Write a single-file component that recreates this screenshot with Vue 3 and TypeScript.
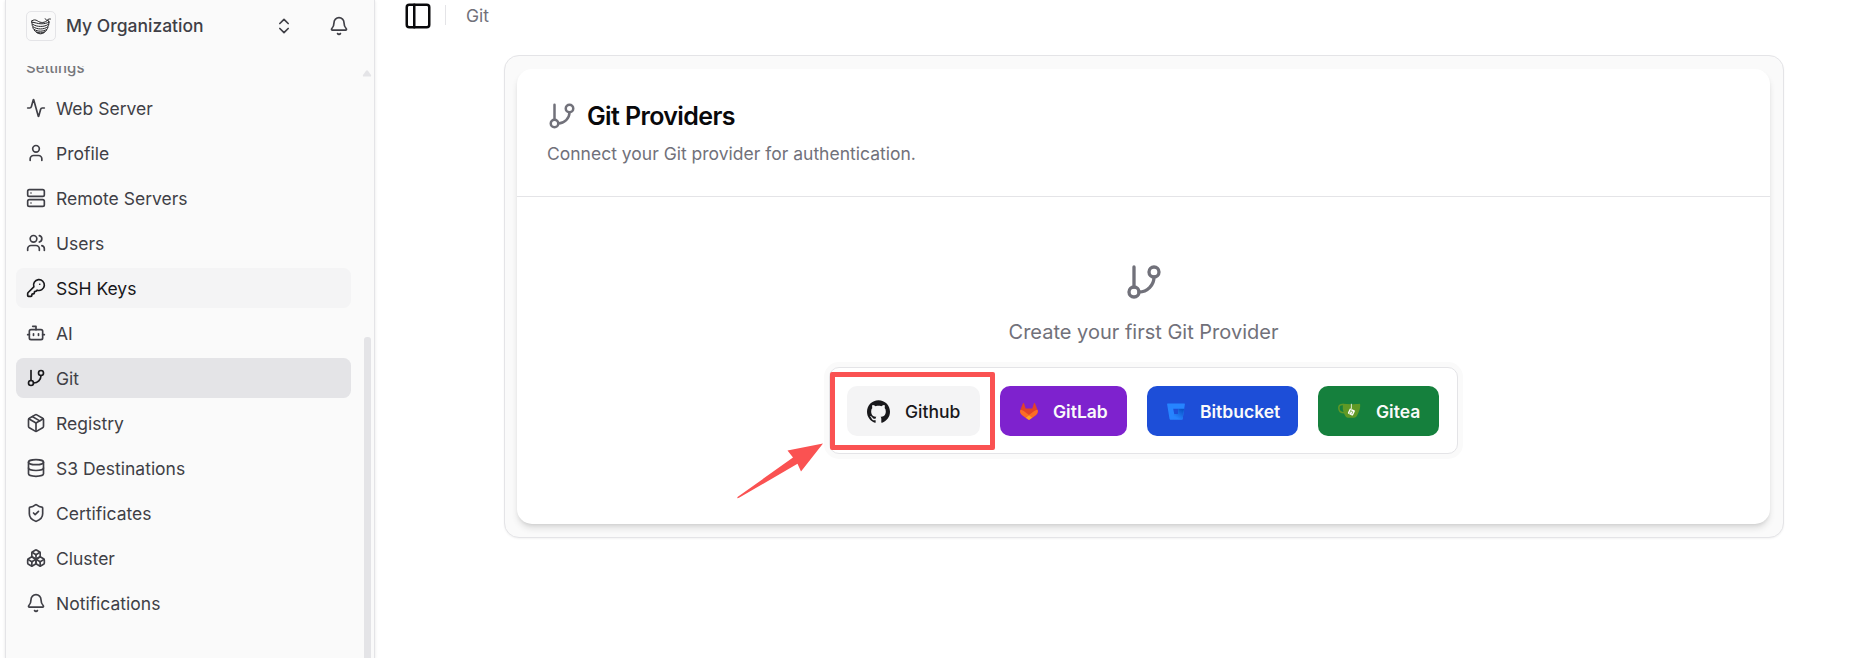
<script setup lang="ts">
interface NavItem {
  label: string
  paths: string[]
  state?: 'active' | 'hover'
}

const branch = [
  'M6 3v12',
  'M21 6a3 3 0 1 1-6 0 3 3 0 0 1 6 0',
  'M9 18a3 3 0 1 1-6 0 3 3 0 0 1 6 0',
  'M18 9a9 9 0 0 1-9 9',
]
const bell = ['M10.268 21a2 2 0 0 0 3.464 0', 'M3.262 15.326A1 1 0 0 0 4 17h16a1 1 0 0 0 .74-1.673C19.41 13.956 18 12.499 18 8A6 6 0 0 0 6 8c0 4.499-1.411 5.956-2.738 7.326']

const items: NavItem[] = [
  { label: 'Web Server', paths: ['M22 12h-2.48a2 2 0 0 0-1.93 1.46l-2.35 8.36a.25.25 0 0 1-.48 0L9.24 2.18a.25.25 0 0 0-.48 0l-2.35 8.36A2 2 0 0 1 4.49 12H2'] },
  { label: 'Profile', paths: ['M19 21v-2a4 4 0 0 0-4-4H9a4 4 0 0 0-4 4v2', 'M16 7a4 4 0 1 1-8 0 4 4 0 0 1 8 0'] },
  { label: 'Remote Servers', paths: ['M4 2h16a2 2 0 0 1 2 2v4a2 2 0 0 1-2 2H4a2 2 0 0 1-2-2V4a2 2 0 0 1 2-2z', 'M4 14h16a2 2 0 0 1 2 2v4a2 2 0 0 1-2 2H4a2 2 0 0 1-2-2v-4a2 2 0 0 1 2-2z', 'M6 6h.01', 'M6 18h.01'] },
  { label: 'Users', paths: ['M16 21v-2a4 4 0 0 0-4-4H6a4 4 0 0 0-4 4v2', 'M13 7a4 4 0 1 1-8 0 4 4 0 0 1 8 0', 'M22 21v-2a4 4 0 0 0-3-3.87', 'M16 3.13a4 4 0 0 1 0 7.75'] },
  { label: 'SSH Keys', state: 'hover', paths: ['M2.586 17.414A2 2 0 0 0 2 18.828V21a1 1 0 0 0 1 1h3a1 1 0 0 0 1-1v-1a1 1 0 0 1 1-1h1a1 1 0 0 0 1-1v-1a1 1 0 0 1 1-1h.172a2 2 0 0 0 1.414-.586l.814-.814a6.5 6.5 0 1 0-4-4z', 'M16.5 7.5h.01'] },
  { label: 'AI', paths: ['M12 8V4H8', 'M6 8h12a2 2 0 0 1 2 2v8a2 2 0 0 1-2 2H6a2 2 0 0 1-2-2v-8a2 2 0 0 1 2-2z', 'M2 14h2', 'M20 14h2', 'M15 13v2', 'M9 13v2'] },
  { label: 'Git', state: 'active', paths: branch },
  { label: 'Registry', paths: ['M11 21.73a2 2 0 0 0 2 0l7-4A2 2 0 0 0 21 16V8a2 2 0 0 0-1-1.73l-7-4a2 2 0 0 0-2 0l-7 4A2 2 0 0 0 3 8v8a2 2 0 0 0 1 1.73z', 'M12 22V12', 'M3.3 7 12 12l8.7-5', 'm7.5 4.27 9 5.15'] },
  { label: 'S3 Destinations', paths: ['M21 5c0 1.66-4.03 3-9 3S3 6.66 3 5s4.03-3 9-3 9 1.34 9 3z', 'M3 5v14a9 3 0 0 0 18 0V5', 'M3 12a9 3 0 0 0 18 0'] },
  { label: 'Certificates', paths: ['M20 13c0 5-3.5 7.5-7.66 8.95a1 1 0 0 1-.67-.01C7.5 20.5 4 18 4 13V6a1 1 0 0 1 1-1c2 0 4.5-1.2 6.24-2.72a1.17 1.17 0 0 1 1.52 0C14.51 3.81 17 5 19 5a1 1 0 0 1 1 1z', 'm9 12 2 2 4-4'] },
  { label: 'Cluster', paths: ['M2.97 12.92A2 2 0 0 0 2 14.63v3.24a2 2 0 0 0 .97 1.71l3 1.8a2 2 0 0 0 2.06 0L12 19v-5.5l-5-3-4.03 2.42Z', 'm7 16.5-4.74-2.85', 'm7 16.5 5-3', 'M7 16.5v5.17', 'M12 13.5V19l3.97 2.38a2 2 0 0 0 2.06 0l3-1.8a2 2 0 0 0 .97-1.71v-3.24a2 2 0 0 0-.97-1.71L17 10.5l-5 3Z', 'm17 16.5-5-3', 'm17 16.5 4.74-2.85', 'M17 16.5v5.17', 'M7.97 4.42A2 2 0 0 0 7 6.13v4.37l5 3 5-3V6.13a2 2 0 0 0-.97-1.71l-3-1.8a2 2 0 0 0-2.06 0l-3 1.8Z', 'M12 8 7.26 5.15', 'm12 8 4.74-2.85', 'M12 13.5V8'] },
  { label: 'Notifications', paths: bell },
]
</script>

<template>
  <div class="page">
    <aside class="sidebar">
      <header class="org">
        <span class="logo">
          <svg width="20" height="17" viewBox="0 0 20 17" fill="none" stroke="#18181b" stroke-width=".95" stroke-linecap="round" stroke-linejoin="round">
            <path d="M.8 2.900C2.500 1.500 4.700 1.600 6.500 2.900c3 2.200 7.200 2.300 10.100-.7M14.200.8c.5 1.200 1.400 1.500 2.400 1.400.4-.9 1.300-1.400 2.800-1.200M17 2.300l1 1.700" />
            <path d="M.8 2.900C.5 4.400.8 5.600 1.500 6.200c4.500 3 12 3 16 0 .6-.7.7-1.500.5-2.200" />
            <path d="M1 4.200c3 .1 5.500 1.600 9 1.600 3.200 0 5.700-.4 8-1.800M1.100 6.400c0 1 .3 1.800.8 2.300 4.500 3 11 3 15 0 .6-.7.8-1.500.9-2.300M1.800 9.200c.1 1 .6 1.600 1.100 2.100 4 2.500 9 2.500 13 0 .6-.6.900-1.300 1.100-2.100M3.100 11.900c.300.8.8 1.300 1.500 1.700 3 1.700 6.600 1.700 9.600 0 .7-.4 1.300-1 1.600-1.700M5.600 14.600c2.200 1.700 5.500 1.700 7.700 0" />
          </svg>
        </span>
        <span class="org-name">My Organization</span>
        <svg class="icon chevrons" viewBox="0 0 24 24"><path d="m7 15 5 5 5-5" /><path d="m7 9 5-5 5 5" /></svg>
        <svg class="icon org-bell" viewBox="0 0 24 24"><path v-for="d in bell" :key="d" :d="d" /></svg>
      </header>
      <div class="scroller">
        <nav class="menu">
          <div class="group-label">Settings</div>
          <a v-for="item in items" :key="item.label" class="item" :class="item.state">
            <svg class="icon" viewBox="0 0 24 24"><path v-for="d in item.paths" :key="d" :d="d" /></svg>
            <span>{{ item.label }}</span>
          </a>
        </nav>
        <div class="track">
          <svg width="10" height="7" viewBox="0 0 10 7"><path d="M4 .8Q5-.2 6 .8L9 5Q9.500 6.500 8 6.500H2Q.5 6.500 1 5Z" fill="#e4e4e7" /></svg>
          <div class="thumb"></div>
        </div>
      </div>
    </aside>

    <main class="main">
      <header class="topbar">
        <svg class="icon panel-icon" viewBox="0 0 24 24"><rect width="18" height="18" x="3" y="3" rx="2" /><path d="M9 3v18" /></svg>
        <span class="separator"></span>
        <span class="crumb">Git</span>
      </header>
      <section class="frame">
        <div class="card">
          <header class="card-header">
            <h1 class="title">
              <svg class="icon title-icon" viewBox="0 0 24 24"><path v-for="d in branch" :key="d" :d="d" /></svg>
              <span>Git Providers</span>
            </h1>
            <p class="description">Connect your Git provider for authentication.</p>
          </header>
          <div class="card-body">
            <svg class="icon big-icon" viewBox="0 0 24 24"><path v-for="d in branch" :key="d" :d="d" /></svg>
            <p class="prompt">Create your first Git Provider</p>
            <div class="providers">
              <button class="provider github">
                <svg class="github-icon" viewBox="0 0 24 24" fill="#18181b"><path d="M12 .297c-6.630 0-12 5.373-12 12 0 5.303 3.438 9.800 8.205 11.385.6.113.820-.258.820-.577 0-.285-.010-1.040-.015-2.040-3.338.724-4.042-1.610-4.042-1.610C4.422 18.070 3.633 17.700 3.633 17.700c-1.087-.744.084-.729.084-.729 1.205.084 1.838 1.236 1.838 1.236 1.070 1.835 2.809 1.305 3.495.998.108-.776.417-1.305.760-1.605-2.665-.300-5.466-1.332-5.466-5.930 0-1.310.465-2.380 1.235-3.220-.135-.303-.540-1.523.105-3.176 0 0 1.005-.322 3.300 1.230.960-.267 1.980-.399 3-.405 1.020.006 2.040.138 3 .405 2.280-1.552 3.285-1.230 3.285-1.230.645 1.653.240 2.873.120 3.176.765.840 1.230 1.910 1.230 3.220 0 4.610-2.805 5.625-5.475 5.920.420.360.810 1.096.810 2.220 0 1.606-.015 2.896-.015 3.286 0 .315.210.690.825.570C20.565 22.092 24 17.592 24 12.297c0-6.627-5.373-12-12-12" /></svg>
                <span>Github</span>
                <span class="highlight"></span>
                <svg class="arrow" width="90" height="58" viewBox="0 0 90 58"><path d="M1.500 56 57 16.500 51.500 9.500 87 2.500 65 30.500 61.500 22.800 3 56.800Q1 58 1.500 56Z" fill="#fa5252" /></svg>
              </button>
              <button class="provider gitlab">
                <svg class="gitlab-icon" viewBox="0 0 25 24"><path d="m24.507 9.500-.034-.090L21.082.562a.896.896 0 0 0-1.694.091l-2.290 7.010H7.825L5.535.653a.898.898 0 0 0-1.694-.090L.451 9.411.416 9.500a6.297 6.297 0 0 0 2.090 7.278l.012.010.030.022 5.160 3.867 2.560 1.935 1.554 1.176a1.051 1.051 0 0 0 1.268 0l1.555-1.176 2.560-1.935 5.197-3.890.014-.010A6.297 6.297 0 0 0 24.507 9.500Z" fill="#E24329" /><path d="m24.507 9.500-.034-.090a11.440 11.440 0 0 0-4.560 2.051l-7.447 5.632 4.742 3.584 5.197-3.890.014-.010A6.297 6.297 0 0 0 24.507 9.500Z" fill="#FC6D26" /><path d="m7.707 20.677 2.560 1.935 1.555 1.176a1.051 1.051 0 0 0 1.268 0l1.555-1.176 2.560-1.935-4.743-3.584-4.755 3.584Z" fill="#FCA326" /><path d="M5.010 11.461a11.430 11.430 0 0 0-4.560-2.050L.416 9.500a6.297 6.297 0 0 0 2.090 7.278l.012.010.030.022 5.160 3.867 4.745-3.584-7.444-5.632Z" fill="#FC6D26" /></svg>
                <span>GitLab</span>
              </button>
              <button class="provider bitbucket">
                <svg class="bitbucket-icon" viewBox="0 0 18 17">
                  <defs><linearGradient id="bucket-shade" x1="1" y1="0.100" x2="0.400" y2="0.800"><stop offset=".1" stop-color="#0b55cc" /><stop offset="1" stop-color="#2684ff" /></linearGradient></defs>
                  <path d="M.6.500h16.800q.6 0 .5.700L15.600 15.900q-.1.600-.7.600H3.300q-.7 0-.8-.7L.1 1.200Q0 .5.600.500ZM7.200 11.100h3.700l.9-5.300H6.200Z" fill="#2684ff" fill-rule="evenodd" />
                  <path d="M17.100 5.800h-5.300l-.9 5.300H7.200l-4.400 5.200q.2.200.5.200h11.600q.6 0 .7-.6Z" fill="url(#bucket-shade)" />
                </svg>
                <span>Bitbucket</span>
              </button>
              <button class="provider gitea">
                <svg class="gitea-icon" viewBox="0 0 23 16">
                  <path d="M5.500 1.600C2.500 1.100.8 2.500.8 4.700c0 3 2.200 5.100 5.600 5.100" fill="none" stroke="#609926" stroke-width="1.500" />
                  <path d="M4.800.8C10 1.500 17 1.400 22 .8c.7 2.700-.4 7.700-3.200 12.200-.8 1.300-1.400 1.700-2.800 1.700H10C7.300 14.700 5.500 10 4.800 6Z" fill="#609926" />
                  <path d="m12.300 5.400 4.100 1.900q.8.400.4 1.200l-1.700 3.500q-.4.800-1.200.4l-3.500-1.700q-.8-.4-.4-1.200l1.600-3.600q.2-.600.700-.500Z" fill="#fff" />
                  <path d="M13.400.8v5" fill="none" stroke="#fff" stroke-width=".8" />
                  <path d="m13.300 6.400-1.800 4.100M12.700 7.900l2.200 1-1.200 2.300" fill="none" stroke="#609926" stroke-width=".7" />
                </svg>
                <span>Gitea</span>
              </button>
            </div>
          </div>
        </div>
      </section>
    </main>
  </div>
</template>

<style>
body {
  margin: 0;
  background: #fff;
}
</style>

<style scoped>
.page {
  display: flex;
  box-sizing: border-box;
  width: 1870px;
  height: 658px;
  padding-left: 5px;
  overflow: hidden;
  background: #fff;
  color: #09090b;
  font-family: Inter, "Liberation Sans", sans-serif;
  font-size: 17.5px;
  line-height: 25px;
}
.icon {
  flex: none;
  width: 20px;
  height: 20px;
  fill: none;
  stroke: currentColor;
  stroke-width: 2;
  stroke-linecap: round;
  stroke-linejoin: round;
}
.sidebar {
  display: flex;
  flex-direction: column;
  flex: none;
  box-sizing: border-box;
  width: 370px;
  border: solid #e4e4e7;
  border-width: 0 1px;
  background: #fafafa;
  box-shadow: 0 1px 3px rgba(0, 0, 0, 0.1);
  color: #3f3f46;
}
.org {
  display: flex;
  align-items: center;
  flex: none;
  box-sizing: border-box;
  height: 66px;
  padding: 0 25px 14px 20px;
}
.logo {
  display: flex;
  align-items: center;
  justify-content: center;
  box-sizing: border-box;
  width: 30px;
  height: 30px;
  border: 1px solid #e4e4e7;
  border-radius: 5px;
}
.org-name {
  margin: -2px 0 0 10px;
  font-weight: 500;
}
.chevrons {
  margin-left: auto;
}
.org-bell {
  margin-left: 35px;
}
.scroller {
  display: flex;
  flex: 1;
  min-height: 0;
  overflow: hidden;
}
.menu {
  display: flex;
  flex-direction: column;
  gap: 5px;
  width: 335px;
  margin-left: 10px;
}
.group-label {
  height: 40px;
  margin: -23px 0 0;
  padding-left: 10px;
  color: #76767b;
  font-size: 15px;
  font-weight: 500;
  line-height: 49px;
}
.item {
  display: flex;
  align-items: center;
  flex: none;
  gap: 10px;
  box-sizing: border-box;
  height: 40px;
  padding: 0 10px;
  border-radius: 7.5px;
}
.item.hover {
  background: #f4f4f5;
  color: #18181b;
}
.item.active {
  background: #e4e4e7;
}
.item.active .icon {
  color: #18181b;
}
.track {
  display: flex;
  flex-direction: column;
  align-items: center;
  width: 10px;
  margin: 4px 2px 0 auto;
}
.thumb {
  flex: 1;
  width: 7px;
  margin-top: 260px;
  border-radius: 3px 3px 0 0;
  background: #e4e4e7;
}
.main {
  display: flex;
  flex-direction: column;
  flex: 1;
  min-width: 0;
}
.topbar {
  display: flex;
  align-items: center;
  height: 32px;
  padding-left: 28px;
  color: #71717a;
}
.panel-icon {
  width: 30px;
  height: 30px;
  color: #09090b;
}
.separator {
  width: 1px;
  height: 20px;
  margin: -2px 20px 0 12px;
  background: #e4e4e7;
}
.crumb {
  margin-top: -2px;
}
.frame {
  box-sizing: border-box;
  width: 1280px;
  height: 483px;
  margin: 23px 0 0 129px;
  padding: 13px 13px 12px 12px;
  border: 1px solid #e4e4e7;
  border-radius: 15px;
  background: #fafafa;
  box-shadow: 0 1px 2px rgba(0, 0, 0, 0.05);
}
.card {
  display: flex;
  flex-direction: column;
  height: 455px;
  border-radius: 15px;
  background: #fff;
  box-shadow: 0 5px 7px -1px rgba(0, 0, 0, 0.12), 0 2px 4px -2px rgba(0, 0, 0, 0.12);
}
.card-header {
  box-sizing: border-box;
  height: 128px;
  padding: 32px 30px 0;
  border-bottom: 1px solid #e4e4e7;
}
.title {
  display: flex;
  align-items: center;
  gap: 10px;
  height: 30px;
  margin: 0;
  font-size: 25px;
  font-weight: 600;
  letter-spacing: -0.625px;
}
.title-icon {
  width: 30px;
  height: 30px;
  color: #71717a;
}
.description {
  margin: 10px 0 0;
  color: #71717a;
}
.card-body {
  display: flex;
  flex-direction: column;
  align-items: center;
  padding-top: 65px;
}
.big-icon {
  width: 40px;
  height: 40px;
  color: #71717a;
}
.prompt {
  margin: 15px 0 0;
  color: #71717a;
  font-size: 20px;
  line-height: 30px;
}
.providers {
  display: flex;
  gap: 20px;
  box-sizing: border-box;
  height: 87px;
  margin-top: 20px;
  padding: 18px 18px 0 17px;
  border: 1px solid #e4e4e7;
  border-radius: 10px;
  background: #fff;
  box-shadow: 0 0 0 5px #fafafa;
}
.provider {
  position: relative;
  display: flex;
  align-items: center;
  box-sizing: border-box;
  height: 50px;
  padding: 0 0 0 20px;
  border: 0;
  border-radius: 10px;
  color: #fafafa;
  font: 600 17.5px/25px Inter, "Liberation Sans", sans-serif;
  white-space: nowrap;
}
.provider > svg:first-child {
  flex: none;
}
.github {
  width: 133px;
  background: #f4f4f5;
  color: #18181b;
  font-weight: 500;
}
.gitlab {
  width: 127px;
  background: #7e22ce;
}
.bitbucket {
  width: 151px;
  background: #1d4ed8;
}
.gitea {
  width: 121px;
  background: #15803d;
}
.github-icon {
  width: 23px;
  height: 23px;
  margin-right: 15px;
}
.gitlab-icon {
  width: 18px;
  height: 17px;
  margin-right: 15px;
}
.bitbucket-icon {
  width: 18px;
  height: 17px;
  margin-right: 15px;
}
.gitea-icon {
  width: 23px;
  height: 16px;
  margin-right: 15px;
}
.highlight {
  position: absolute;
  top: -14px;
  left: -17px;
  box-sizing: border-box;
  width: 165px;
  height: 78px;
  border: 5px solid #fa5252;
  border-radius: 2px;
}
.arrow {
  position: absolute;
  top: 55px;
  left: -111px;
}
</style>
